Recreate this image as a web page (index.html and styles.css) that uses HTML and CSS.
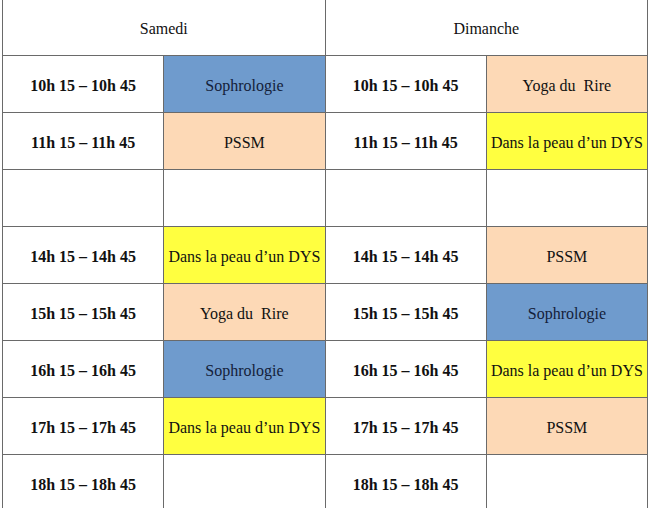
FILE: index.html
```html
<!DOCTYPE html>
<html lang="fr">
<head>
<meta charset="utf-8">
<title>Planning</title>
<link rel="stylesheet" href="styles.css">
</head>
<body>
<table class="planning">
  <colgroup><col class="c"><col class="c"><col class="c"><col class="c"></colgroup>
  <tr class="head"><th colspan="2">Samedi</th><th colspan="2">Dimanche</th></tr>
  <tr><td class="time">10h 15 – 10h 45</td><td class="blue">Sophrologie</td><td class="time">10h 15 – 10h 45</td><td class="peach">Yoga du&nbsp; Rire</td></tr>
  <tr><td class="time">11h 15 – 11h 45</td><td class="peach">PSSM</td><td class="time">11h 15 – 11h 45</td><td class="yellow">Dans la peau d’un DYS</td></tr>
  <tr><td></td><td></td><td></td><td></td></tr>
  <tr><td class="time">14h 15 – 14h 45</td><td class="yellow">Dans la peau d’un DYS</td><td class="time">14h 15 – 14h 45</td><td class="peach">PSSM</td></tr>
  <tr><td class="time">15h 15 – 15h 45</td><td class="peach">Yoga du&nbsp; Rire</td><td class="time">15h 15 – 15h 45</td><td class="blue">Sophrologie</td></tr>
  <tr><td class="time">16h 15 – 16h 45</td><td class="blue">Sophrologie</td><td class="time">16h 15 – 16h 45</td><td class="yellow">Dans la peau d’un DYS</td></tr>
  <tr><td class="time">17h 15 – 17h 45</td><td class="yellow">Dans la peau d’un DYS</td><td class="time">17h 15 – 17h 45</td><td class="peach">PSSM</td></tr>
  <tr><td class="time">18h 15 – 18h 45</td><td></td><td class="time">18h 15 – 18h 45</td><td></td></tr>
</table>
</body>
</html>
```
FILE: styles.css
```css
html, body { margin: 0; padding: 0; background: #ffffff; }
body { font-family: "Liberation Serif", "Times New Roman", serif; color: #111; }
.planning {
  border-collapse: collapse;
  table-layout: fixed;
  width: 646px;
  margin: -1px 0 0 2px;
  font-size: 16px;
}
.planning .c { width: 161px; }
.planning th, .planning td {
  border: 1px solid #6a6a6a;
  padding: 3px 0 0 0;
  text-align: center;
  vertical-align: middle;
  height: 53px;
  white-space: nowrap;
  overflow: hidden;
}
.planning th { font-weight: normal; height: 53px; padding-top: 2px; }
.time { font-weight: bold; }
.blue { background: #6f9bcd; color: #14213a; }
.peach { background: #fdd9b6; }
.yellow { background: #ffff40; }
```
